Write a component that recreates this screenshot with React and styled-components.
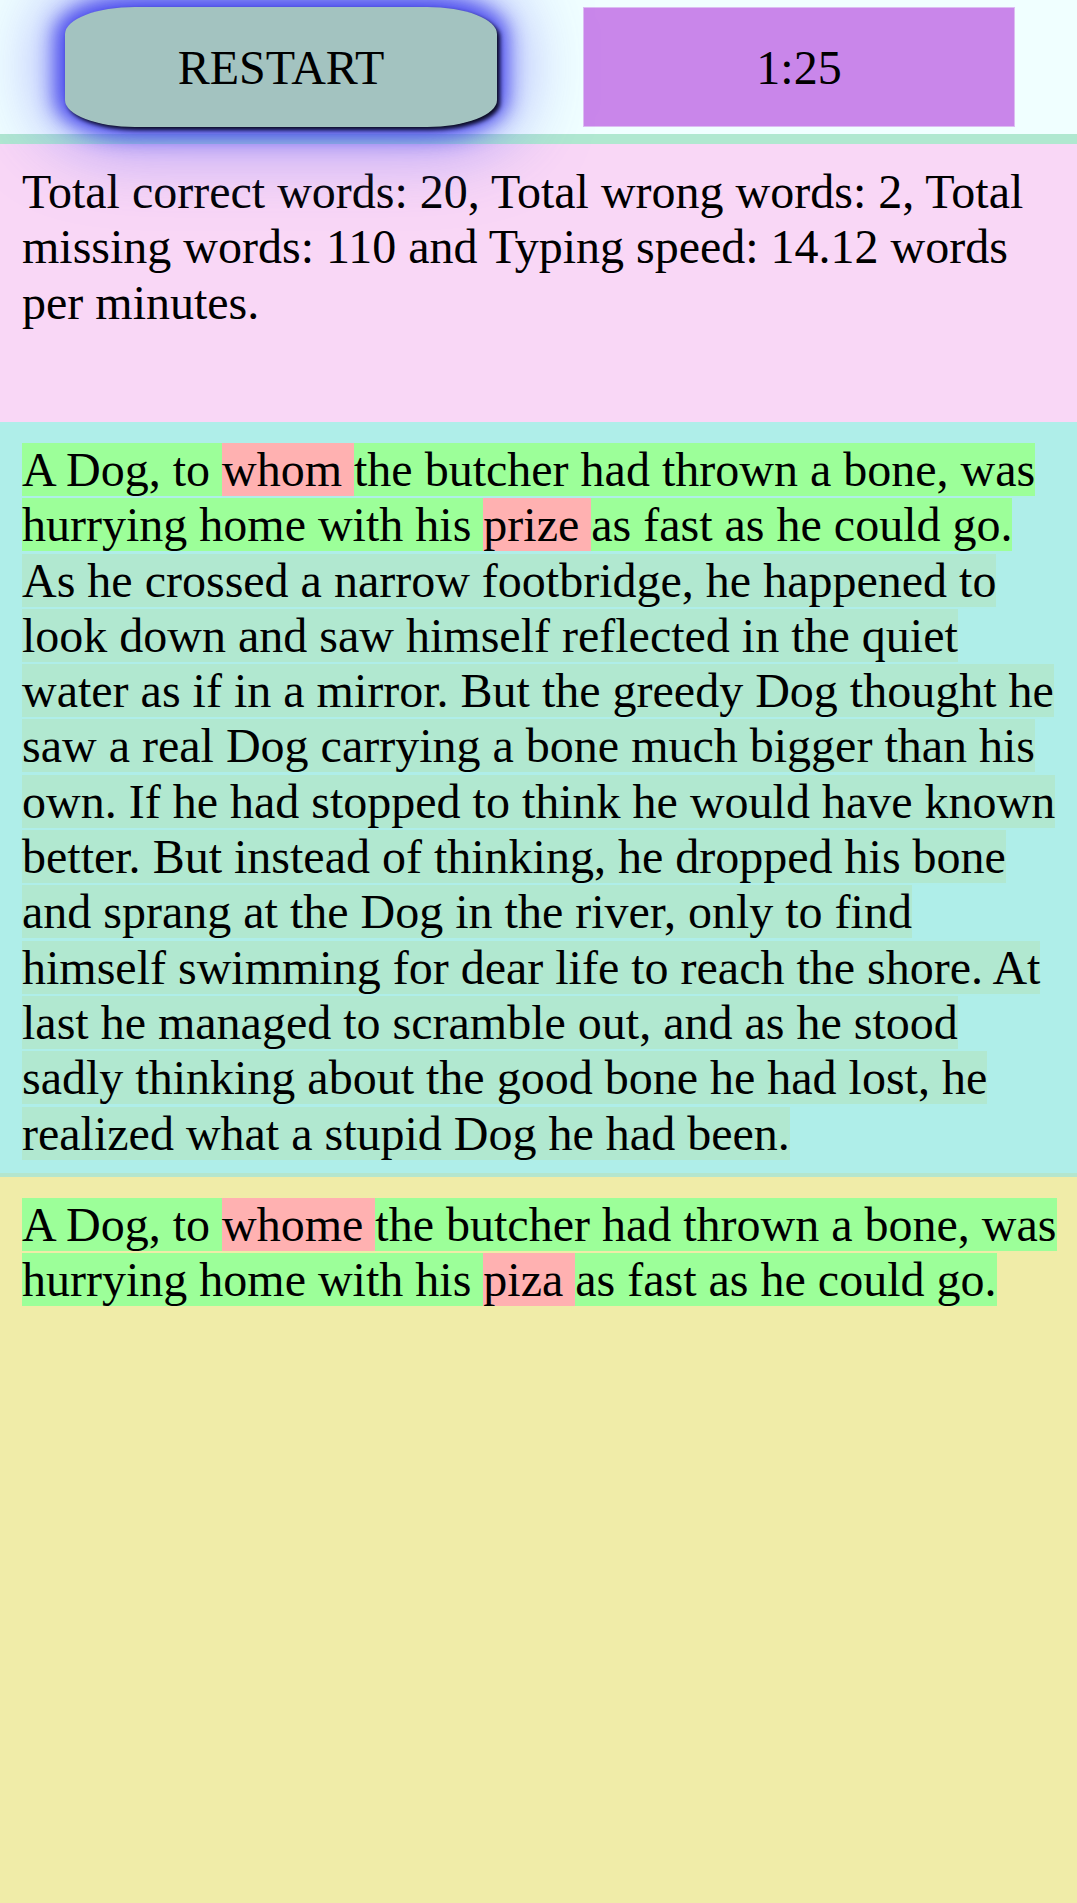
import React from "react";
import styled, { createGlobalStyle } from "styled-components";

const Global = createGlobalStyle`
  html, body { margin: 0; padding: 0; }
  body {
    font-family: "Liberation Serif", "Times New Roman", serif;
    color: #000;
  }
  * { box-sizing: border-box; }
`;

const Page = styled.div`
  min-height: 100vh;
  display: flex;
  flex-direction: column;
`;

const TopBar = styled.div`
  display: flex;
  align-items: center;
  gap: 86px;
  padding: 7px 0 7px 65px;
  background: #f0ffff;
  border-bottom: 10px solid #b0e8d0;
`;

const RestartButton = styled.button`
  position: relative;
  z-index: 1;
  width: 432px;
  height: 120px;
  border: none;
  background: #a3c3c0;
  border-radius: 70px / 27px;
  font-family: "Liberation Serif", "Times New Roman", serif;
  font-size: 48px;
  color: #000;
  padding: 0;
  cursor: pointer;
  box-shadow: 3px 3px 4px #0a0a20, 0 0 20px 10px rgba(66, 66, 235, 0.95),
    0 0 70px 20px rgba(110, 110, 250, 0.62);
`;

const Timer = styled.div`
  width: 432px;
  height: 120px;
  display: flex;
  align-items: center;
  justify-content: center;
  background: #c986ea;
  border: 1px solid #dcbdf2;
  font-size: 48px;
`;

const Stats = styled.div`
  height: 278px;
  padding: 20px 20px 0 22px;
  background: #f9d7f6;
  font-size: 48px;
  line-height: 55.25px;
`;

const Panel = styled.div`
  padding: ${(p) => (p.$top ? "20px 20px 12px 22px" : "20px 20px 20px 22px")};
  background: ${(p) => p.$bg};
  font-size: 48px;
  line-height: 55.3px;
  ${(p) => (p.$grow ? "flex: 1;" : "")}
  ${(p) => (p.$borderTop ? `border-top: 4px solid ${p.$borderTop};` : "")}
`;

const Word = styled.span`
  background: ${(p) =>
    p.$state === "correct"
      ? "#9cff99"
      : p.$state === "wrong"
      ? "#ffb1b1"
      : "#b1e8d0"};
`;

const ORIGINAL =
  "A Dog, to whom the butcher had thrown a bone, was hurrying home with his prize as fast as he could go. As he crossed a narrow footbridge, he happened to look down and saw himself reflected in the quiet water as if in a mirror. But the greedy Dog thought he saw a real Dog carrying a bone much bigger than his own. If he had stopped to think he would have known better. But instead of thinking, he dropped his bone and sprang at the Dog in the river, only to find himself swimming for dear life to reach the shore. At last he managed to scramble out, and as he stood sadly thinking about the good bone he had lost, he realized what a stupid Dog he had been.";

const TYPED =
  "A Dog, to whome the butcher had thrown a bone, was hurrying home with his piza as fast as he could go.";

export default function App() {
  const orig = ORIGINAL.split(" ");
  const typed = TYPED.split(" ");
  const stateOf = (i) =>
    i < typed.length ? (typed[i] === orig[i] ? "correct" : "wrong") : "pending";

  return (
    <Page>
      <Global />
      <TopBar>
        <RestartButton>RESTART</RestartButton>
        <Timer>1:25</Timer>
      </TopBar>
      <Stats>
        Total correct words: 20, Total wrong words: 2, Total missing words: 110
        and Typing speed: 14.12 words per minutes.
      </Stats>
      <Panel $bg="#afeee9" $top>
        {orig.map((w, i) => (
          <Word key={i} $state={stateOf(i)}>
            {w + " "}
          </Word>
        ))}
      </Panel>
      <Panel $bg="#f0eca8" $grow $borderTop="#b4e6ce">
        {typed.map((w, i) => (
          <Word key={i} $state={stateOf(i)}>
            {w + " "}
          </Word>
        ))}
      </Panel>
    </Page>
  );
}
